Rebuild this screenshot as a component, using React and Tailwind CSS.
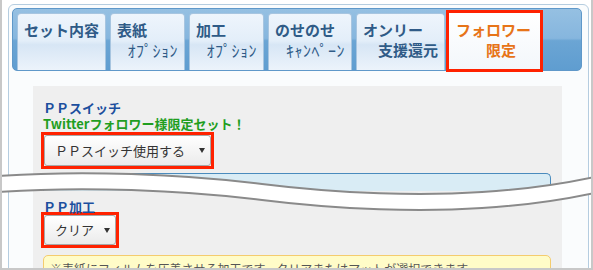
import React from "react";

const FONT = { fontFamily: '"Noto Sans CJK JP", "Noto Sans", sans-serif' };

function Arrow() {
  return (
    <svg width="6" height="5" viewBox="0 0 6 5" className="shrink-0">
      <path d="M0 0H6L3 5Z" fill="#333" />
    </svg>
  );
}

function Tab({ w, top, bottom, bold2 }) {
  return (
    <div
      className={`${w} h-full shrink-0 rounded-t-[4px] border border-b-0 border-[#a7c5e0] bg-[linear-gradient(to_bottom,#eef5fc_0%,#e3eef9_48%,#d7e6f5_55%,#ecf3fb_100%)] flex flex-col pt-[6px] px-[6px] text-[#2f5b87]`}
    >
      <div className="text-[15px] font-bold leading-[20px] whitespace-nowrap">{top}</div>
      {bottom && (
        <div
          className={`text-right leading-[20px] whitespace-nowrap ${
            bold2 ? "text-[15px] font-bold" : "text-[16px] font-normal tracking-[0.5px]"
          }`}
        >
          {bottom}
        </div>
      )}
    </div>
  );
}

export default function App() {
  return (
    <div
      className="relative w-[593px] h-[270px] overflow-hidden bg-white border-x-2 border-b-2 border-[#c8c8c8] pt-[4px]"
      style={FONT}
    >
      <div className="ml-[6px] w-[581px] h-[300px] border border-[#b5cde0] rounded-t-[6px] bg-[#fafcfd] pt-[3px] pl-[3px]">
        {/* tab bar */}
        <div className="w-[570px] h-[63px] rounded-[5px] border border-[#5f98c9] bg-[linear-gradient(to_bottom,#95c0e2_0%,#86b6de_48%,#6ba5d4_52%,#5f9dd0_100%)] pt-[4px] pl-[4px] flex items-start gap-[4px]">
          <Tab w="w-[89px]" top="セット内容" />
          <Tab w="w-[75px]" top="表紙" bottom="ｵﾌﾟｼｮﾝ" />
          <Tab w="w-[75px]" top="加工" bottom="ｵﾌﾟｼｮﾝ" />
          <Tab w="w-[84px]" top="のせのせ" bottom="ｷｬﾝﾍﾟｰﾝ" />
          <Tab w="w-[89px]" top="オンリー" bottom="支援還元" bold2 />
          <div className="ml-[-3px] mt-[-3px] w-[97px] h-[62px] shrink-0 border-[3px] border-[#ff2200] bg-[linear-gradient(to_bottom,#ffffff,#f3f7fb)] flex flex-col pt-[7px] pl-[7px] text-[#e77418] text-[15px] font-bold leading-[20px]">
            <div className="whitespace-nowrap">フォロワー</div>
            <div className="pl-[30px] whitespace-nowrap">限定</div>
          </div>
        </div>

        {/* content */}
        <div className="ml-[21px] mt-[15px] w-[529px] h-[300px] bg-[#efefef] pl-[10px] pt-[14px]">
          <div className="text-[13px] leading-[16px] font-bold text-[#1c4f9e]">ＰＰスイッチ</div>
          <div className="text-[13px] leading-[16px] font-bold text-[#1f9e1f]">
            Twitterフォロワー様限定セット！
          </div>
          <div className="ml-[-2px] w-fit border-[3px] border-[#ff2200]">
            <div className="w-[167px] h-[31px] rounded-[3px] border border-[#a8a8a8] bg-[linear-gradient(to_bottom,#ffffff,#ebebeb)] flex items-center justify-between pl-[10px] pr-[5px] text-[13px] text-[#333]">
              <span>ＰＰスイッチ使用する</span>
              <Arrow />
            </div>
          </div>
          <div className="mt-[4px] w-[508px] h-[18px] rounded-tr-[5px] border border-b-0 border-[#4a8bbd] bg-[#d9ecf5]" />

          <div className="mt-[8px] text-[13px] leading-[15px] font-bold text-[#1c4f9e]">ＰＰ加工</div>
          <div className="mt-[-2px] ml-[-2px] w-fit border-[3px] border-[#ff2200]">
            <div className="w-[72px] h-[30px] rounded-[3px] border border-[#a8a8a8] bg-[linear-gradient(to_bottom,#ffffff,#ebebeb)] flex items-center justify-between pl-[10px] pr-[5px] text-[13px] text-[#333]">
              <span>クリア</span>
              <Arrow />
            </div>
          </div>
          <div className="mt-[7px] w-[508px] h-[40px] rounded-[5px] border border-[#f4cc6e] bg-[#fffcc8] pl-[6px] pt-[5px] text-[12px] leading-[16px] text-[#555]">
            ※表紙にフィルムを圧着させる加工です。クリアまたはマットが選択できます。
          </div>
        </div>
      </div>

      {/* page break wave */}
      <svg
        className="absolute left-0 top-0 pointer-events-none"
        width="593"
        height="270"
        viewBox="0 0 593 270"
      >
        <path
          d="M-4,176 C80,170 180,174 260,184 C340,194 420,196 480,192 C530,189 570,182 597,176 L597,192 C570,198 530,205 480,208 C420,212 340,210 260,200 C180,190 80,186 -4,192 Z"
          fill="#ffffff"
        />
        <path
          d="M-4,176 C80,170 180,174 260,184 C340,194 420,196 480,192 C530,189 570,182 597,176"
          fill="none"
          stroke="#8a8a8a"
          strokeWidth="2"
        />
        <path
          d="M-4,192 C80,186 180,190 260,200 C340,210 420,212 480,208 C530,205 570,198 597,192"
          fill="none"
          stroke="#8a8a8a"
          strokeWidth="2"
        />
      </svg>
    </div>
  );
}
